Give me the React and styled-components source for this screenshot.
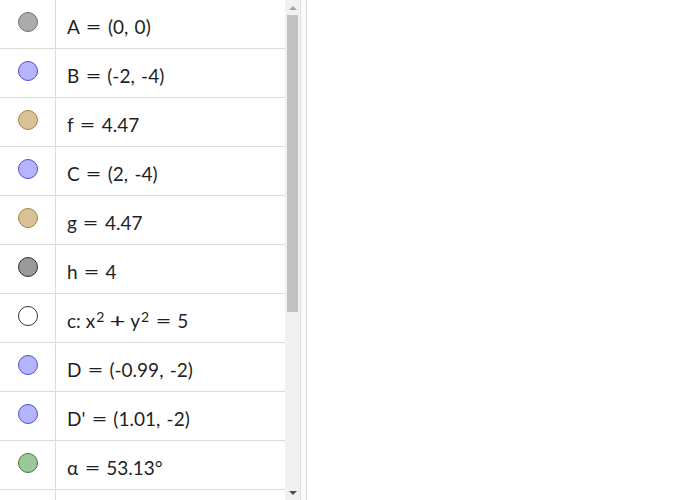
import React from "react";
import styled, { createGlobalStyle } from "styled-components";

const Global = createGlobalStyle`
  html, body {
    margin: 0;
    padding: 0;
    height: 500px;
    overflow: hidden;
    background: #fff;
  }
`;

const Page = styled.div`
  display: flex;
  width: 700px;
  height: 500px;
  overflow: hidden;
  font-family: Lato, "DejaVu Sans", sans-serif;
`;

const AlgebraPanel = styled.div`
  display: flex;
  width: 300px;
  height: 500px;
`;

const List = styled.div`
  width: 285px;
  height: 500px;
  overflow: hidden;
`;

const Row = styled.div`
  display: flex;
  height: 48px;
  border-bottom: 1px solid #dcdcdc;
`;

const MarbleCell = styled.div`
  width: 56px;
  flex: none;
  border-right: 1px solid #dcdcdc;
  display: flex;
  justify-content: center;
  padding-top: 12px;
  box-sizing: border-box;
`;

const Marble = styled.div`
  width: 18px;
  height: 18px;
  border-radius: 50%;
  background: ${(p) => p.$fill};
  border: 1px solid ${(p) => p.$stroke};
`;

const Formula = styled.div`
  display: flex;
  align-items: center;
  padding: 5px 0 0 11px;
  font-size: 19px;
  color: #1f1f1f;
`;

const Expr = styled.span`
  white-space: pre;
`;

const Op = styled.span`
  display: inline-block;
  width: ${(p) => (p.$wide ? 28 : 26)}px;
  text-align: center;
`;

const OpGlyph = styled.span`
  display: inline-block;
  transform: scaleX(1.45);
`;

const Sup = styled.span`
  font-size: 14px;
  vertical-align: 6px;
  line-height: 0;
  margin-left: 1px;
`;

const Scrollbar = styled.div`
  width: 15px;
  height: 500px;
  background: #f1f1f1;
  display: flex;
  flex-direction: column;
  align-items: center;
`;

const Arrow = styled.div`
  height: 15px;
  width: 15px;
  display: flex;
  align-items: center;
  justify-content: center;
  flex: none;

  &::after {
    content: "";
    border-left: 4px solid transparent;
    border-right: 4px solid transparent;
    ${(p) =>
      p.$down
        ? "border-top: 4px solid #505050;"
        : "border-bottom: 4px solid #a3a3a3;"}
  }
`;

const Track = styled.div`
  flex: 1;
  width: 100%;
  display: flex;
  justify-content: center;
`;

const Thumb = styled.div`
  width: 11px;
  background: #c1c1c1;
`;

const Splitter = styled.div`
  width: 5px;
  height: 500px;
  border-left: 1px solid #dedede;
  border-right: 1px solid #dedede;
  background: #fafafa;
`;

const Graphics = styled.div`
  flex: 1;
  background: #fff;
`;

const colors = {
  gray: ["#ababab", "#707070"],
  blue: ["#b4b4ff", "#4d4dd0"],
  tan: ["#d9c396", "#a5824a"],
  dark: ["#9a9a9a", "#333333"],
  white: ["#ffffff", "#333333"],
  green: ["#9bc89b", "#3f7f3f"],
};

const C = ",\u2004";

const rows = [
  { c: "gray", parts: ["A", "=", `(0${C}0)`] },
  { c: "blue", parts: ["B", "=", `(-2${C}-4)`] },
  { c: "tan", parts: ["f", "=", "4.47"] },
  { c: "blue", parts: ["C", "=", `(2${C}-4)`] },
  { c: "tan", parts: ["g", "=", "4.47"] },
  { c: "dark", parts: ["h", "=", "4"] },
  { c: "white", parts: ["c: x", "^2", "+", "y", "^2", "=", "5"] },
  { c: "blue", parts: ["D", "=", `(-0.99${C}-2)`] },
  { c: "blue", parts: ["D'", "=", `(1.01${C}-2)`] },
  { c: "green", parts: ["α", "=", "53.13°"] },
];

function Part({ p }) {
  if (p === "=" || p === "+")
    return (
      <Op $wide={p === "="}>
        <OpGlyph>{p}</OpGlyph>
      </Op>
    );
  if (p.startsWith("^")) return <Sup>{p.slice(1)}</Sup>;
  return <span>{p}</span>;
}

export default function App() {
  return (
    <>
      <Global />
      <Page>
        <AlgebraPanel>
          <List>
            {rows.map((r, i) => (
              <Row key={i}>
                <MarbleCell>
                  <Marble $fill={colors[r.c][0]} $stroke={colors[r.c][1]} />
                </MarbleCell>
                <Formula>
                  <Expr>
                    {r.parts.map((p, j) => (
                      <Part key={j} p={p} />
                    ))}
                  </Expr>
                </Formula>
              </Row>
            ))}
            <Row>
              <MarbleCell />
              <Formula />
            </Row>
          </List>
          <Scrollbar>
            <Arrow />
            <Track>
              <Thumb style={{ height: 297 }} />
            </Track>
            <Arrow $down />
          </Scrollbar>
        </AlgebraPanel>
        <Splitter />
        <Graphics />
      </Page>
    </>
  );
}
